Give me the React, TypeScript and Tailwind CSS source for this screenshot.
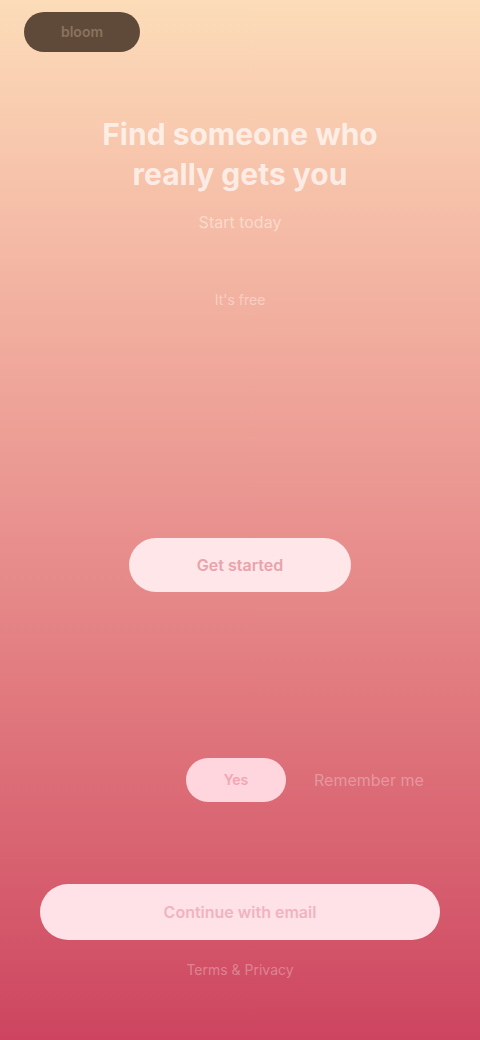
export default function App() {
    return (
        <div
            className="w-[480px] h-[1040px] flex flex-col bg-gradient-to-b from-[#fcdcb9] via-[#e9928f] to-[#cd4460] font-['Inter','Noto_Sans',sans-serif]"
        >
            {/* header */}
            <div className="pt-3 pl-6">
                <div className="h-10 w-[116px] rounded-full bg-[#5f4a3a] flex items-center justify-center text-[#8a735f] text-sm font-semibold">
                    bloom
                </div>
            </div>

            {/* hero */}
            <div className="mt-[62px] px-16 text-center">
                <h1 className="text-[30px] leading-10 font-bold text-white/70">
                    Find someone who really gets you
                </h1>
                <p className="mt-4 text-base text-white/45">Start today</p>
                <p className="mt-14 text-sm text-white/40">It's free</p>
            </div>

            {/* cta */}
            <div className="mt-[228px] flex justify-center">
                <button className="h-[54px] w-[222px] rounded-full bg-[#ffe6e9] text-[#e8a3ac] text-base font-semibold">
                    Get started
                </button>
            </div>

            {/* toggle row */}
            <div className="mt-[166px] flex items-center pl-[186px] gap-7">
                <div className="h-11 w-[100px] rounded-full bg-[#ffd6dd] flex items-center justify-center text-[#f0a6b2] text-sm font-semibold">
                    Yes
                </div>
                <span className="text-base text-white/30">Remember me</span>
            </div>

            {/* bottom button */}
            <div className="mt-[82px] px-10">
                <button className="h-14 w-full rounded-full bg-[#ffe2e8] text-[#f2b3bf] text-base font-semibold">
                    Continue with email
                </button>
                <p className="mt-5 text-center text-sm text-white/30">Terms &amp; Privacy</p>
            </div>
        </div>
    );
}
